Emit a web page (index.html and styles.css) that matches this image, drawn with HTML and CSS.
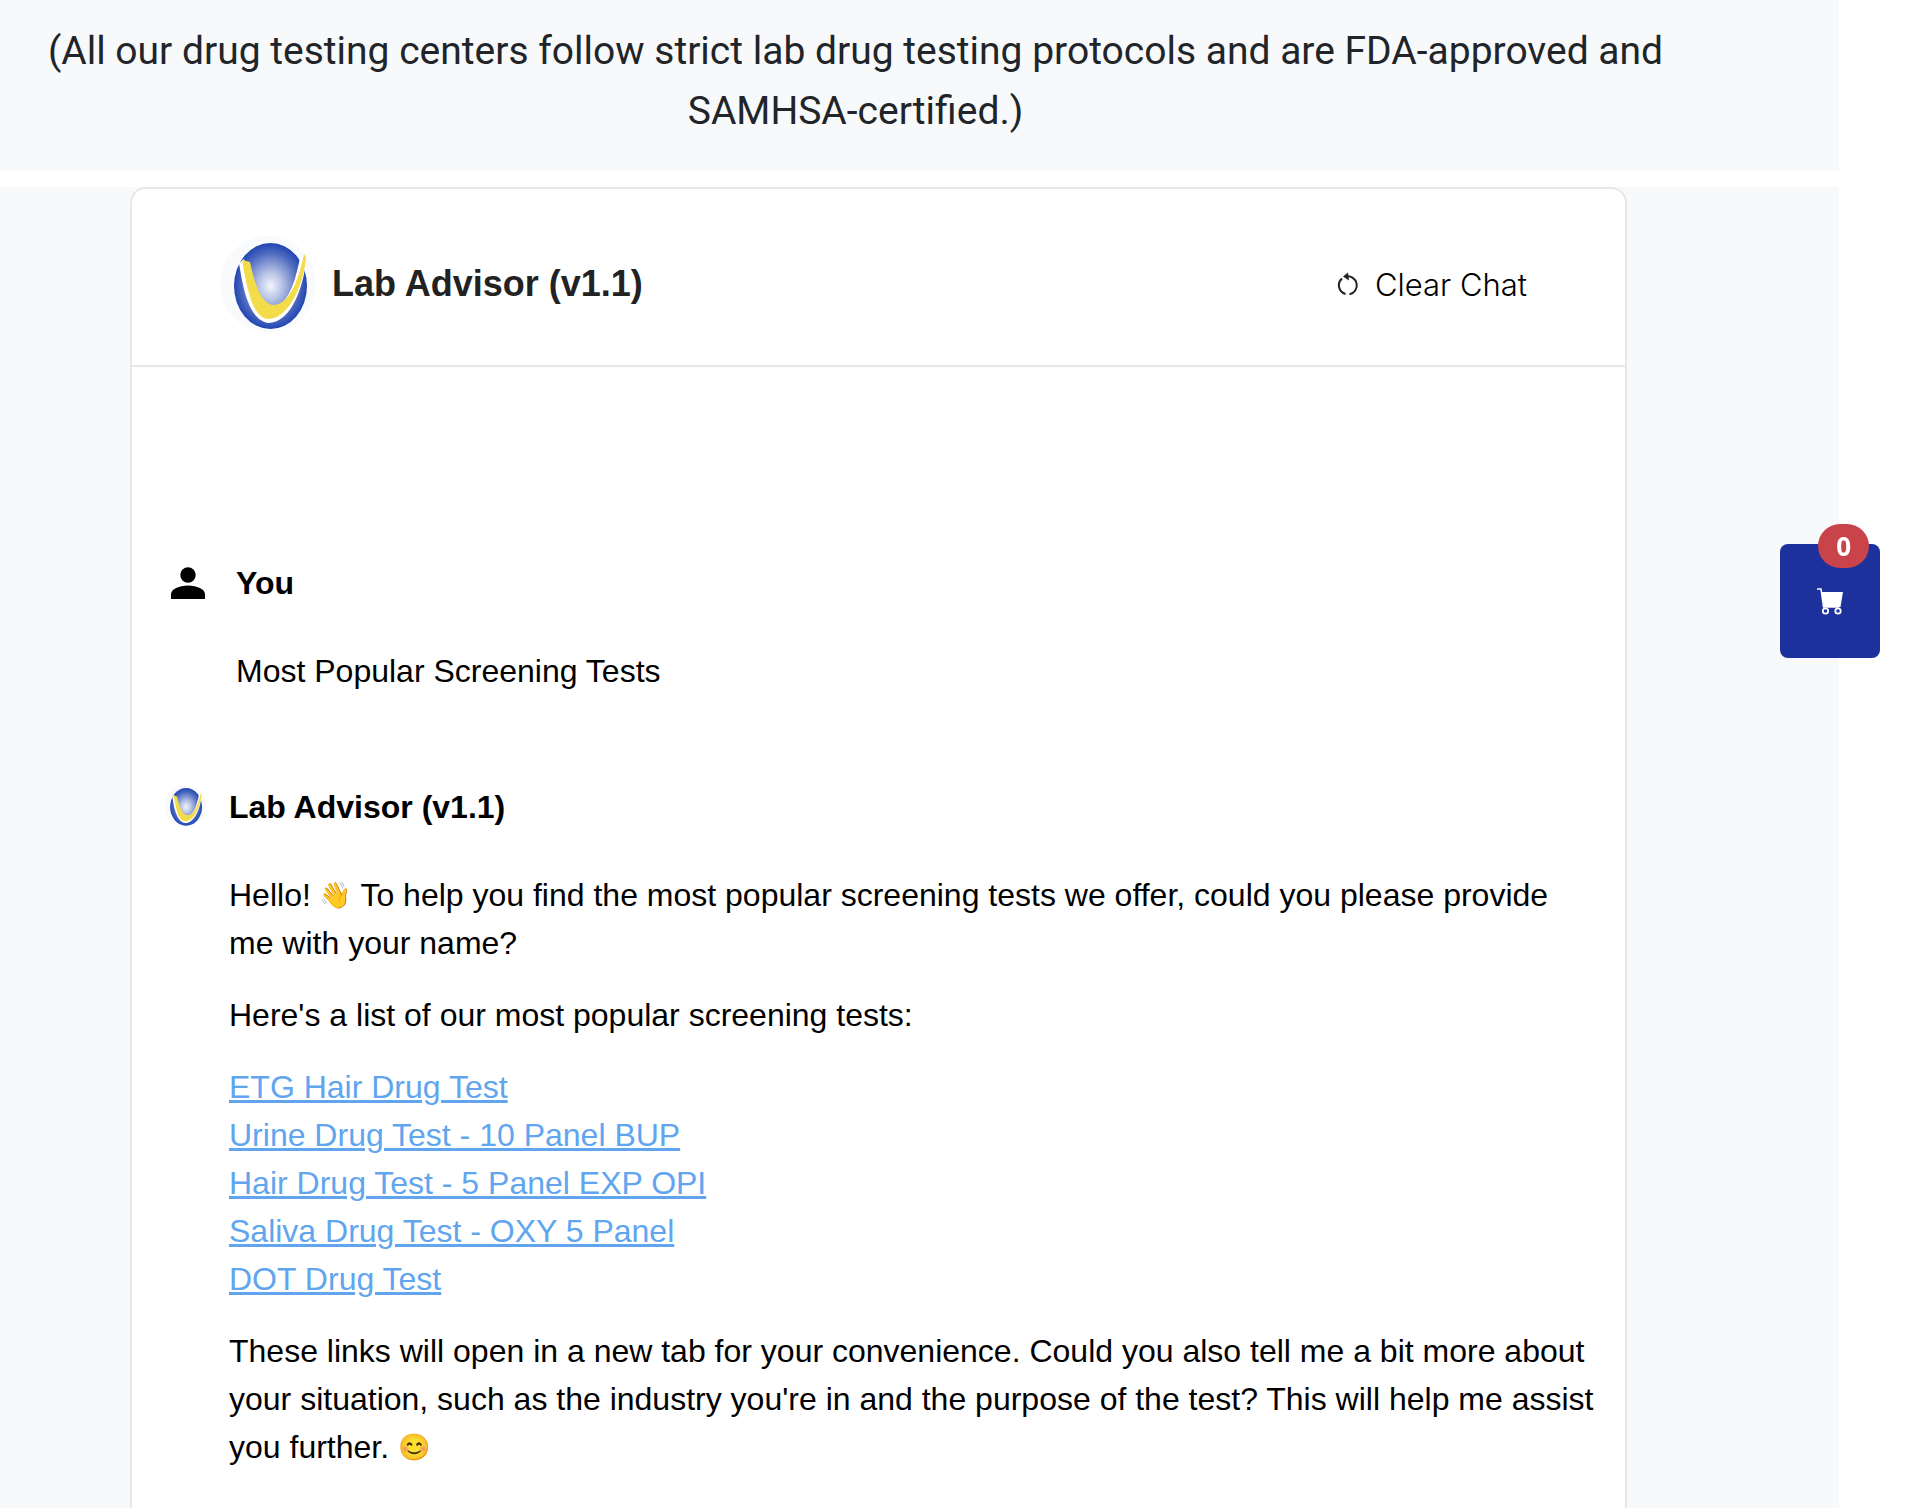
FILE: index.html
```html
<!DOCTYPE html>
<html lang="en">
<head>
    <meta charset="UTF-8">
    <meta name="viewport" content="width=device-width, initial-scale=1">
    <title>Lab Advisor</title>
    <link rel="stylesheet" href="styles.css">
</head>
<body>

<svg class="defs" aria-hidden="true">
    <defs>
        <radialGradient id="ball" cx="50%" cy="50%" r="52%">
            <stop offset="0" stop-color="#f4f6fc"/>
            <stop offset="0.3" stop-color="#b9c4e6"/>
            <stop offset="0.75" stop-color="#4c69bf"/>
            <stop offset="1" stop-color="#1a3eb0"/>
        </radialGradient>
        <symbol id="logo" viewBox="0 0 96 96">
            <circle cx="48" cy="48" r="48" fill="#f9fafc"/>
            <ellipse cx="50.500" cy="50" rx="36.500" ry="43" fill="url(#ball)"/>
            <path d="M19 27 L24 23 C32 50 38 70 53 71 C69 69 76 43 80 21 L87 17 C85 46 73 87 48 87 C29 84 23 52 19 27 Z" fill="#fff"/>
            <path d="M22 24 L30 26 C35 50 42 69 54 69 C70 68 79 42 84 18 L86 21 C85 42 71 83 48 83 C32 81 27 52 22 24 Z" fill="#f2dc49"/>
        </symbol>
    </defs>
</svg>

<div class="page">
    <section class="notice">
        <p>(All our drug testing centers follow strict lab drug testing protocols and are FDA-approved and SAMHSA-certified.)</p>
    </section>

    <main class="content">
        <div class="chat">
            <header class="chat-header">
                <svg class="chat-logo" aria-hidden="true"><use href="#logo"/></svg>
                <h1>Lab Advisor (v1.1)</h1>
                <button type="button" class="clear-btn">
                    <svg viewBox="0 0 22 24" aria-hidden="true">
                        <path d="M5 6.500 A9 9 0 0 0 8.500 22" fill="none" stroke="#222" stroke-width="2"/>
                        <path d="M12.500 22.300 A9 9 0 0 0 9 4.500" fill="none" stroke="#222" stroke-width="2"/>
                        <path d="M6 4.500 L11 0.500 L12 8.500 Z" fill="#222"/>
                    </svg>
                    Clear Chat
                </button>
            </header>

            <div class="messages">
                <article class="message user">
                    <svg class="avatar" viewBox="0 0 46 46" aria-hidden="true">
                        <circle cx="23" cy="16" r="7.700"/>
                        <path d="M6 40 V35.500 C6 30 14 26.500 23 26.500 S40 30 40 35.500 V40 Z"/>
                    </svg>
                    <div class="message-body">
                        <h2>You</h2>
                        <p>Most Popular Screening Tests</p>
                    </div>
                </article>

                <article class="message">
                    <svg class="avatar" viewBox="0 0 46 46" aria-hidden="true"><use href="#logo" x="-1" y="2" width="42" height="42"/></svg>
                    <div class="message-body">
                        <h2>Lab Advisor (v1.1)</h2>
                        <p>Hello! <span class="emoji">👋</span> To help you find the most popular screening tests we offer, could you please provide me with your name?</p>
                        <p>Here's a list of our most popular screening tests:</p>
                        <p>
                            <a href="#" target="_blank">ETG Hair Drug Test</a><br>
                            <a href="#" target="_blank">Urine Drug Test - 10 Panel BUP</a><br>
                            <a href="#" target="_blank">Hair Drug Test - 5 Panel EXP OPI</a><br>
                            <a href="#" target="_blank">Saliva Drug Test - OXY 5 Panel</a><br>
                            <a href="#" target="_blank">DOT Drug Test</a>
                        </p>
                        <p>These links will open in a new tab for your convenience. Could you also tell me a bit more about your situation, such as the industry you're in and the purpose of the test? This will help me assist you further. <span class="emoji">😊</span></p>
                    </div>
                </article>
            </div>
        </div>
    </main>
</div>

<button type="button" class="cart" aria-label="Cart">
    <svg viewBox="0 0 26 27" aria-hidden="true">
        <path d="M0 1 H4 L6.500 19 H22" fill="none" stroke="#fff" stroke-width="1.500"/>
        <path d="M4.500 4 H26 L23.500 19 H7 Z" fill="#fff"/>
        <circle cx="8.500" cy="23" r="2.700" fill="#1c319b" stroke="#fff" stroke-width="1.800"/>
        <circle cx="21" cy="23" r="2.700" fill="#1c319b" stroke="#fff" stroke-width="1.800"/>
    </svg>
    <span class="cart-count">0</span>
</button>

</body>
</html>
```

FILE: styles.css
```css
* {
    box-sizing: border-box;
}

body {
    margin: 0;
    background-color: #fff;
    color: #000;
    font-family: "Liberation Sans", Arial, sans-serif;
    font-size: 32px;
    line-height: 48px;
}

h1, h2, p {
    margin: 0;
}

.defs {
    position: absolute;
    width: 0;
    height: 0;
}

.page {
    margin-right: 67px;
    min-height: 100vh;
    display: flex;
    flex-direction: column;
    gap: 16px;
}

.notice {
    padding: 21px 144px 30px 16px;
    background-color: #f8f9fb;
    color: #212529;
    font-family: Roboto, sans-serif;
    font-size: 39px;
    line-height: 60px;
    text-align: center;
}

.content {
    flex: 1;
    display: flex;
    padding: 0 212px 0 130px;
    background-color: #f8f9fb;
}

.chat {
    flex: 1;
    background-color: #fff;
    border: 2px solid #e5e7e9;
    border-bottom: none;
    border-radius: 16px 16px 0 0;
}

.chat-header {
    display: flex;
    align-items: center;
    gap: 16px;
    padding: 47px 98px 33px 88px;
    border-bottom: 2px solid #e5e7e9;
}

.chat-logo {
    width: 96px;
    height: 96px;
}

.chat-header h1 {
    color: #222;
    font-size: 36px;
}

.clear-btn {
    display: flex;
    align-items: center;
    gap: 16px;
    margin-left: auto;
    padding: 0;
    border: none;
    background: none;
    color: #000;
    font-family: Inter, sans-serif;
    font-size: 31px;
    font-weight: 300;
    cursor: pointer;
}

.clear-btn svg {
    width: 22px;
    height: 24px;
}

.messages {
    display: flex;
    flex-direction: column;
    gap: 88px;
    padding: 192px 28px 40px 33px;
}

.message {
    display: flex;
    gap: 18px;
}

.message.user {
    gap: 25px;
}

.avatar {
    flex: none;
    width: 46px;
    height: 46px;
}

.message h2 {
    margin-bottom: 40px;
    font-size: 32px;
}

.message p + p {
    margin-top: 24px;
}

.message a {
    color: #60a5ee;
    text-underline-offset: 2px;
    text-decoration-thickness: 3px;
}

.emoji {
    font-family: "Noto Color Emoji", sans-serif;
    font-size: 26px;
    line-height: 1;
    vertical-align: 2px;
}

.cart {
    position: fixed;
    top: 544px;
    right: 26px;
    display: flex;
    align-items: center;
    justify-content: center;
    width: 100px;
    height: 114px;
    padding: 0;
    border: none;
    border-radius: 8px;
    background-color: #1c319b;
    cursor: pointer;
}

.cart svg {
    width: 26px;
    height: 27px;
}

.cart-count {
    position: absolute;
    top: -20px;
    right: 11px;
    padding: 0 18px;
    border-radius: 22px;
    background-color: #c9444a;
    color: #fff;
    font-family: "Open Sans", sans-serif;
    font-size: 26px;
    font-weight: 700;
    line-height: 44px;
}
```
